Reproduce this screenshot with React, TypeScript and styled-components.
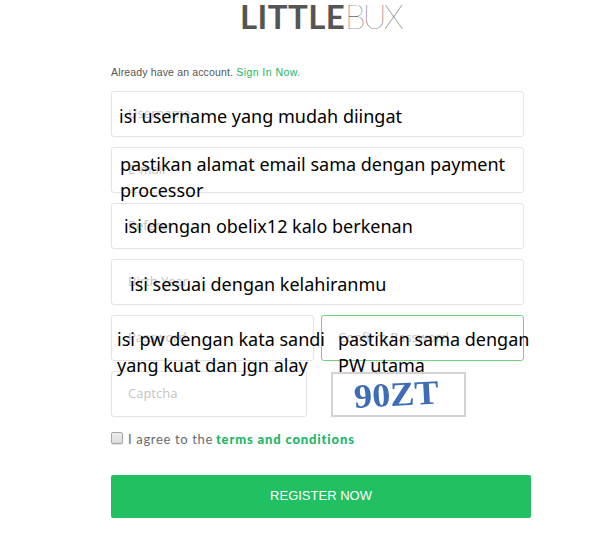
import React from "react";
import styled, { createGlobalStyle } from "styled-components";

const Global = createGlobalStyle`
  html, body { margin: 0; padding: 0; background: #fff; }
  body { font-family: "Open Sans", "Liberation Sans", sans-serif; }
`;

const Page = styled.main`
  width: 595px;
  height: 555px;
  overflow: hidden;
  box-sizing: border-box;
  padding-left: 111px;
`;

const Logo = styled.h1`
  margin: 0;
  width: 420px;
  height: 33px;
  padding-left: 129px;
  box-sizing: border-box;
  font: 700 33px/33px Lato, "Open Sans", sans-serif;
  letter-spacing: 0.4px;
  color: #555;
  white-space: nowrap;
`;

const LogoThin = styled.span`
  font-weight: 100;
  letter-spacing: -2.8px;
  color: #222;
`;

const Already = styled.p`
  margin: 33px 0 0;
  height: 13px;
  font: 400 10.5px/13px "Liberation Sans", sans-serif;
  letter-spacing: 0.15px;
  color: #555;
`;

const SignIn = styled.a`
  color: #22b566;
  letter-spacing: 0.45px;
`;

const Form = styled.div`
  margin-top: 12px;
  width: 420px;
  display: flex;
  flex-direction: column;
  gap: 10px;
`;

const Row = styled.div<{ $gap: number }>`
  display: flex;
  gap: ${(p) => p.$gap}px;
  height: 46px;
`;

const Field = styled.div<{ $width: number; $focus?: boolean }>`
  position: relative;
  box-sizing: border-box;
  flex: none;
  width: ${(p) => p.$width}px;
  height: 46px;
  border: 1px solid ${(p) => (p.$focus ? "#74cf7f" : "#e3e3e3")};
  border-radius: 3px;
  background: #fff;
  padding-left: 16px;
  font: 400 13px/42px "Open Sans", sans-serif;
  color: #c4c4c4;
  white-space: nowrap;
`;

const Note = styled.span<{ $x: number; $y: number; $w: number }>`
  position: absolute;
  left: ${(p) => p.$x}px;
  top: ${(p) => p.$y}px;
  width: ${(p) => p.$w}px;
  font: 400 18px/26px "Noto Sans", "Open Sans", sans-serif;
  color: #000;
  white-space: normal;
  z-index: 2;
`;

const CaptchaBox = styled.div`
  box-sizing: border-box;
  flex: none;
  width: 135px;
  height: 45px;
  margin-top: 1px;
  border: 2px solid #d3d3d3;
  background: #fff;
`;

const Agree = styled.label`
  display: flex;
  align-items: center;
  margin-top: 10px;
  height: 24px;
  font: 400 13px/24px Lato, "Open Sans", sans-serif;
  letter-spacing: 0.65px;
  color: #666a72;
`;

const Check = styled.span`
  box-sizing: border-box;
  width: 12px;
  height: 12px;
  margin: -3px 5px 0 0;
  border: 1px solid #a6a6a6;
  border-radius: 2px;
  background: linear-gradient(#ededed, #dcdcdc);
  box-shadow: 0 1px 1px rgba(0,0,0,.12);
`;

const Terms = styled.a`
  margin-left: 3px;
  font-weight: 900;
  letter-spacing: 0.85px;
  color: #22b566;
`;

const Submit = styled.button`
  display: block;
  margin-top: 24px;
  width: 420px;
  height: 43px;
  border: 0;
  border-radius: 2px;
  padding: 0 0 2px;
  background: #20c063;
  color: #fff;
  font: 400 13px/41px "Liberation Sans", sans-serif;
`;

export default function App() {
  return (
    <Page>
      <Global />
      <Logo>LITTLE<LogoThin>BUX</LogoThin></Logo>
      <Already>Already have an account. <SignIn>Sign In Now.</SignIn></Already>
      <Form>
        <Field $width={413}>
          Username
          <Note $x={7} $y={11} $w={400}>isi username yang mudah diingat</Note>
        </Field>
        <Field $width={413}>
          E-mail
          <Note $x={8} $y={3} $w={400}>pastikan alamat email sama dengan payment processor</Note>
        </Field>
        <Field $width={413}>
          Referer
          <Note $x={12} $y={9} $w={390}>isi dengan obelix12 kalo berkenan</Note>
        </Field>
        <Field $width={413}>
          Birth Year
          <Note $x={18} $y={11} $w={390}>isi sesuai dengan kelahiranmu</Note>
        </Field>
        <Row $gap={7}>
          <Field $width={203}>
            Password
            <Note $x={5} $y={10} $w={215}>isi pw dengan kata sandi yang kuat dan jgn alay</Note>
          </Field>
          <Field $width={203} $focus>
            Confirm Password
            <Note $x={16} $y={10} $w={195}>pastikan sama dengan PW utama</Note>
          </Field>
        </Row>
        <Row $gap={24}>
          <Field $width={196}>Captcha</Field>
          <CaptchaBox>
            <svg width="131" height="41" viewBox="0 0 131 41">
              <g style={{ filter: "blur(0.4px)" }}>
                <text
                  x="21"
                  y="32"
                  fontFamily="Liberation Serif, serif"
                  fontWeight="700"
                  fontSize="34"
                  fill="#3f6cb6"
                  transform="rotate(-3 60 24)"
                  textLength="85"
                  lengthAdjust="spacingAndGlyphs"
                >
                  90ZT
                </text>
              </g>
            </svg>
          </CaptchaBox>
        </Row>
      </Form>
      <Agree>
        <Check />
        I agree to the <Terms>terms and conditions</Terms>
      </Agree>
      <Submit>REGISTER NOW</Submit>
    </Page>
  );
}
